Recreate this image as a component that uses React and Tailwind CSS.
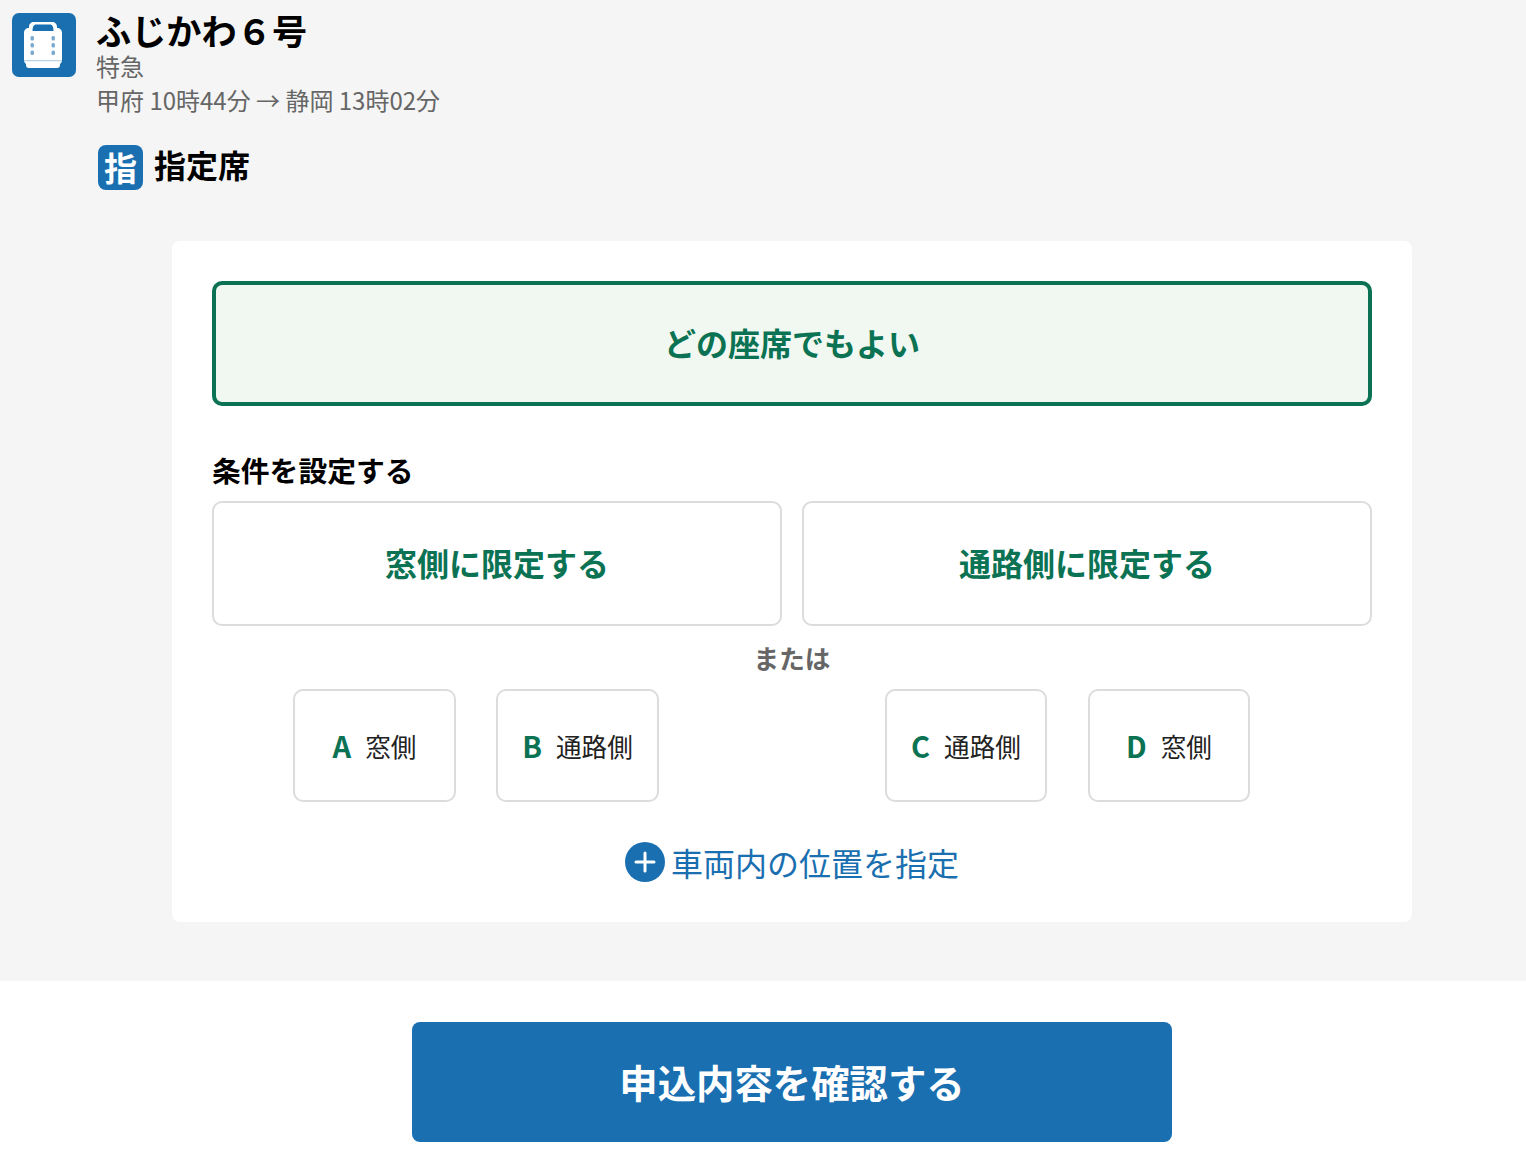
import React from "react";

const font = { fontFamily: '"Noto Sans CJK JP", "Noto Sans", sans-serif' };

function TrainIcon() {
  return (
    <svg viewBox="0 0 64 64" className="w-16 h-16 shrink-0">
      <rect width="64" height="64" rx="7" fill="#1a6fb0" />
      <path d="M22 9h18c3 0 5 2 5 5v1c3 0 5 2 5 5v27c0 2-1 3-2 4v1c0 2-1 3-3 3H17c-2 0-3-1-3-3v-1c-1-1-2-2-2-4V20c0-3 2-5 5-5v-1c0-3 2-5 5-5z" fill="#fff" />
      <path d="M24 11.500h14c2 0 3.500 2 3.500 6.500h-21c0-4.500 1.500-6.500 3.500-6.500z" fill="#1a6fb0" />
      <path d="M12 47h38v1.200H12z" fill="#b9d3e8" />
      <g fill="#7aa9cf">
        <rect x="18.500" y="23" width="3.500" height="4.500" rx="1.500" />
        <rect x="18.500" y="30" width="3.500" height="4.500" rx="1.500" />
        <rect x="18.500" y="37.500" width="3.500" height="4.500" rx="1.500" />
        <rect x="39.500" y="23" width="3.500" height="4.500" rx="1.500" />
        <rect x="39.500" y="30" width="3.500" height="4.500" rx="1.500" />
        <rect x="39.500" y="37.500" width="3.500" height="4.500" rx="1.500" />
      </g>
    </svg>
  );
}

function SeatButton({ letter, label, narrow }) {
  return (
    <button className={`${narrow ? "w-[162px]" : "w-[163px]"} h-[113px] bg-white border-2 border-[#dcdcdc] rounded-[10px] flex items-center justify-center gap-[14px]`}>
      <span className="text-[29px] leading-[44px] pb-[2px] font-bold text-[#0b7353]">{letter}</span>
      <span className="text-[25.600px] leading-[44px] text-[#222]">{label}</span>
    </button>
  );
}

export default function App() {
  return (
    <div style={font} className="min-h-[1158px] bg-white">
      <div className="bg-[#f5f5f5] h-[981px] flex flex-col">
        <div className="flex pl-3 pt-[13px]">
          <TrainIcon />
          <div className="ml-5 -mt-[2px]">
            <div className="text-[35.200px] leading-[38px] font-bold text-black">ふじかわ６号</div>
            <div className="text-[24px] leading-[30px] mt-[2px] text-[#666]">特急</div>
            <div className="text-[24px] leading-[34px] mt-[2px] text-[#666]">甲府 10時44分 → 静岡 13時02分</div>
          </div>
        </div>

        <div className="flex items-start ml-[98px] mt-[28px]">
          <span className="w-[45px] h-[45px] rounded-[8px] bg-[#1a6fb0] text-white font-bold text-[33px] flex items-center justify-center">指</span>
          <span className="ml-[11px] text-[32px] leading-[38px] font-bold text-black">指定席</span>
        </div>

        <div className="mt-[51px] ml-[172px] w-[1240px] h-[681px] bg-white rounded-lg p-10">
          <button className="w-full h-[125px] pb-[4px] bg-[#f1f8f1] border-4 border-[#0b7353] rounded-[10px] text-[32px] font-bold text-[#0b7353]">
            どの座席でもよい
          </button>

          <div className="mt-[43px] text-[28.800px] leading-[42px] font-bold text-black">条件を設定する</div>

          <div className="mt-[10px] grid grid-cols-2 gap-5">
            <button className="h-[125px] pb-[4px] bg-white border-2 border-[#dcdcdc] rounded-[10px] text-[32px] font-bold text-[#0b7353]">窓側に限定する</button>
            <button className="h-[125px] pb-[4px] bg-white border-2 border-[#dcdcdc] rounded-[10px] text-[32px] font-bold text-[#0b7353]">通路側に限定する</button>
          </div>

          <div className="h-[63px] pt-[2px] flex items-center justify-center text-[25.600px] font-bold text-[#666]">または</div>

          <div className="flex ml-[81px]">
            <div className="flex gap-10">
              <SeatButton letter="A" label="窓側" />
              <SeatButton letter="B" label="通路側" />
            </div>
            <div className="flex gap-[41px] ml-[226px]">
              <SeatButton letter="C" label="通路側" narrow />
              <SeatButton letter="D" label="窓側" narrow />
            </div>
          </div>

          <div className="mt-[35px] flex items-center justify-center gap-[6px] text-[32px] text-[#1a6fb0]">
            <svg viewBox="0 0 40 40" className="w-10 h-10">
              <circle cx="20" cy="20" r="20" fill="#1a6fb0" />
              <path d="M20 11v18M11 20h18" stroke="#fff" strokeWidth="3" strokeLinecap="round" />
            </svg>
            <span className="mt-[1px]">車両内の位置を指定</span>
          </div>
        </div>
      </div>

      <div className="pt-[41px] pl-[412px]">
        <button className="w-[760px] h-[120px] bg-[#1a6fb0] rounded-lg text-white text-[38.400px] font-bold">申込内容を確認する</button>
      </div>
    </div>
  );
}
